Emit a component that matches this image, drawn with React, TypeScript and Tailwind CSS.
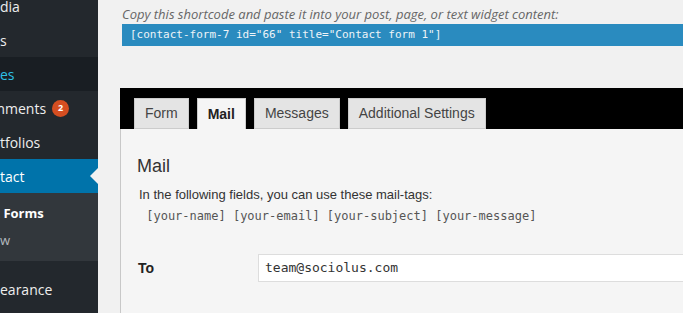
import React from 'react';

const menuFont = { fontFamily: '"Open Sans", "Noto Sans", sans-serif' };

// label whose start is cut off by the left edge of the screenshot
const Clipped = ({ hidden, shown }: { hidden: string; shown: string }) => (
  <span className="whitespace-nowrap">
    <span className="inline-flex w-0 justify-end">{hidden}</span>
    {shown}
  </span>
);

const Sidebar = () => {
  return (
    <div className="w-[98px] shrink-0 bg-[#23282d] overflow-hidden text-[14px] text-[#eeeeee]" style={menuFont}>
      <div className="h-[34px] -mt-[11px] flex items-center">
        <Clipped hidden="Me" shown="dia" />
      </div>
      <div className="h-[34px] flex items-center">
        <Clipped hidden="Post" shown="s" />
      </div>
      <div className="h-[34px] flex items-center bg-[#191e23] text-[#2ec0e6]">
        <Clipped hidden="Pag" shown="es" />
      </div>
      <div className="h-[34px] flex items-center pl-[5px]">
        <Clipped hidden="Com" shown="ments" />
        <span className="ml-[6px] w-[17px] h-[17px] rounded-full bg-[#d54e21] text-white text-[9px] font-bold flex items-center justify-center">
          2
        </span>
      </div>
      <div className="h-[34px] flex items-center">
        <Clipped hidden="Por" shown="tfolios" />
      </div>
      <div className="relative h-[34px] flex items-center bg-[#0073aa] text-white">
        <Clipped hidden="Con" shown="tact" />
        {/* current menu arrow */}
        <span className="absolute right-0 top-[9px] w-0 h-0 border-y-[8px] border-y-transparent border-r-[8px] border-r-[#f1f1f1]" />
      </div>
      <div className="bg-[#32373c] pt-[8px] pb-[7px] text-[13px]">
        <div className="h-[26px] flex items-center font-bold text-white">
          <Clipped hidden="Contact" shown=" Forms" />
        </div>
        <div className="h-[27px] flex items-center text-[#b4b9be]">
          <Clipped hidden="Add Ne" shown="w" />
        </div>
      </div>
      <div className="h-[34px] mt-[11px] flex items-center">
        <Clipped hidden="App" shown="earance" />
      </div>
    </div>
  );
};

const Tab = ({ label, active }: { label: string; active?: boolean }) => (
  <div
    className={
      active
        ? 'h-[31px] px-[10px] flex items-center bg-[#f5f5f5] border border-b-0 border-[#cccccc] font-bold text-[#222222]'
        : 'h-[31px] px-[10px] flex items-center bg-[#e4e4e4] border border-[#cccccc] text-[#444444]'
    }
  >
    {label}
  </div>
);

export default function App() {
  return (
    <div className="flex w-[683px] h-[313px] overflow-hidden bg-[#f1f1f1]">
      <Sidebar />

      <div className="flex-1 min-w-0 pl-[22px] overflow-hidden">
        {/* shortcode */}
        <p className="ml-[2px] mt-[5px] h-[18px] text-[13px] italic text-[#666666] whitespace-nowrap" style={menuFont}>
          Copy this shortcode and paste it into your post, page, or text widget content:
        </p>
        <div
          className="ml-[2px] mt-[1px] h-[22px] bg-[#2a8bbf] text-[#eef4f8] text-[11px] pl-[8px] flex items-center whitespace-nowrap"
          style={{ fontFamily: '"DejaVu Sans Mono", monospace' }}
        >
          [contact-form-7 id="66" title="Contact form 1"]
        </div>

        {/* tabs */}
        <div
          className="mt-[42px] bg-black pt-[10px] pl-[14px] flex gap-[8px] text-[14px]"
          style={{ fontFamily: '"Liberation Sans", Arial, sans-serif' }}
        >
          <Tab label="Form" />
          <Tab label="Mail" active />
          <Tab label="Messages" />
          <Tab label="Additional Settings" />
        </div>

        {/* panel */}
        <div
          className="bg-[#f5f5f5] border-l border-[#c8c8c8] pl-[16px] pt-[25px] h-[200px]"
          style={{ fontFamily: '"Liberation Sans", Arial, sans-serif' }}
        >
          <h2 className="text-[18px] leading-[24px] text-[#333333]">Mail</h2>
          <p className="mt-[8px] ml-[2px] text-[13px] leading-[18px] text-[#333333]">
            In the following fields, you can use these mail-tags:
          </p>
          <p
            className="ml-[2px] mt-[3px] text-[12px] leading-[18px] text-[#555555] whitespace-pre"
            style={{ fontFamily: '"DejaVu Sans Mono", monospace' }}
          >
            {' [your-name] [your-email] [your-subject] [your-message]'}
          </p>

          <div className="mt-[29px] flex items-center">
            <label className="w-[121px] pl-[1px] text-[14px] font-bold text-[#222222]">To</label>
            <div
              className="flex-1 h-[28px] bg-white border border-[#dddddd] border-r-0 pl-[6px] flex items-center text-[13px] text-[#333333] whitespace-nowrap"
              style={{ fontFamily: '"DejaVu Sans Mono", monospace' }}
            >
              team@sociolus.com
            </div>
          </div>
        </div>
      </div>
    </div>
  );
}
